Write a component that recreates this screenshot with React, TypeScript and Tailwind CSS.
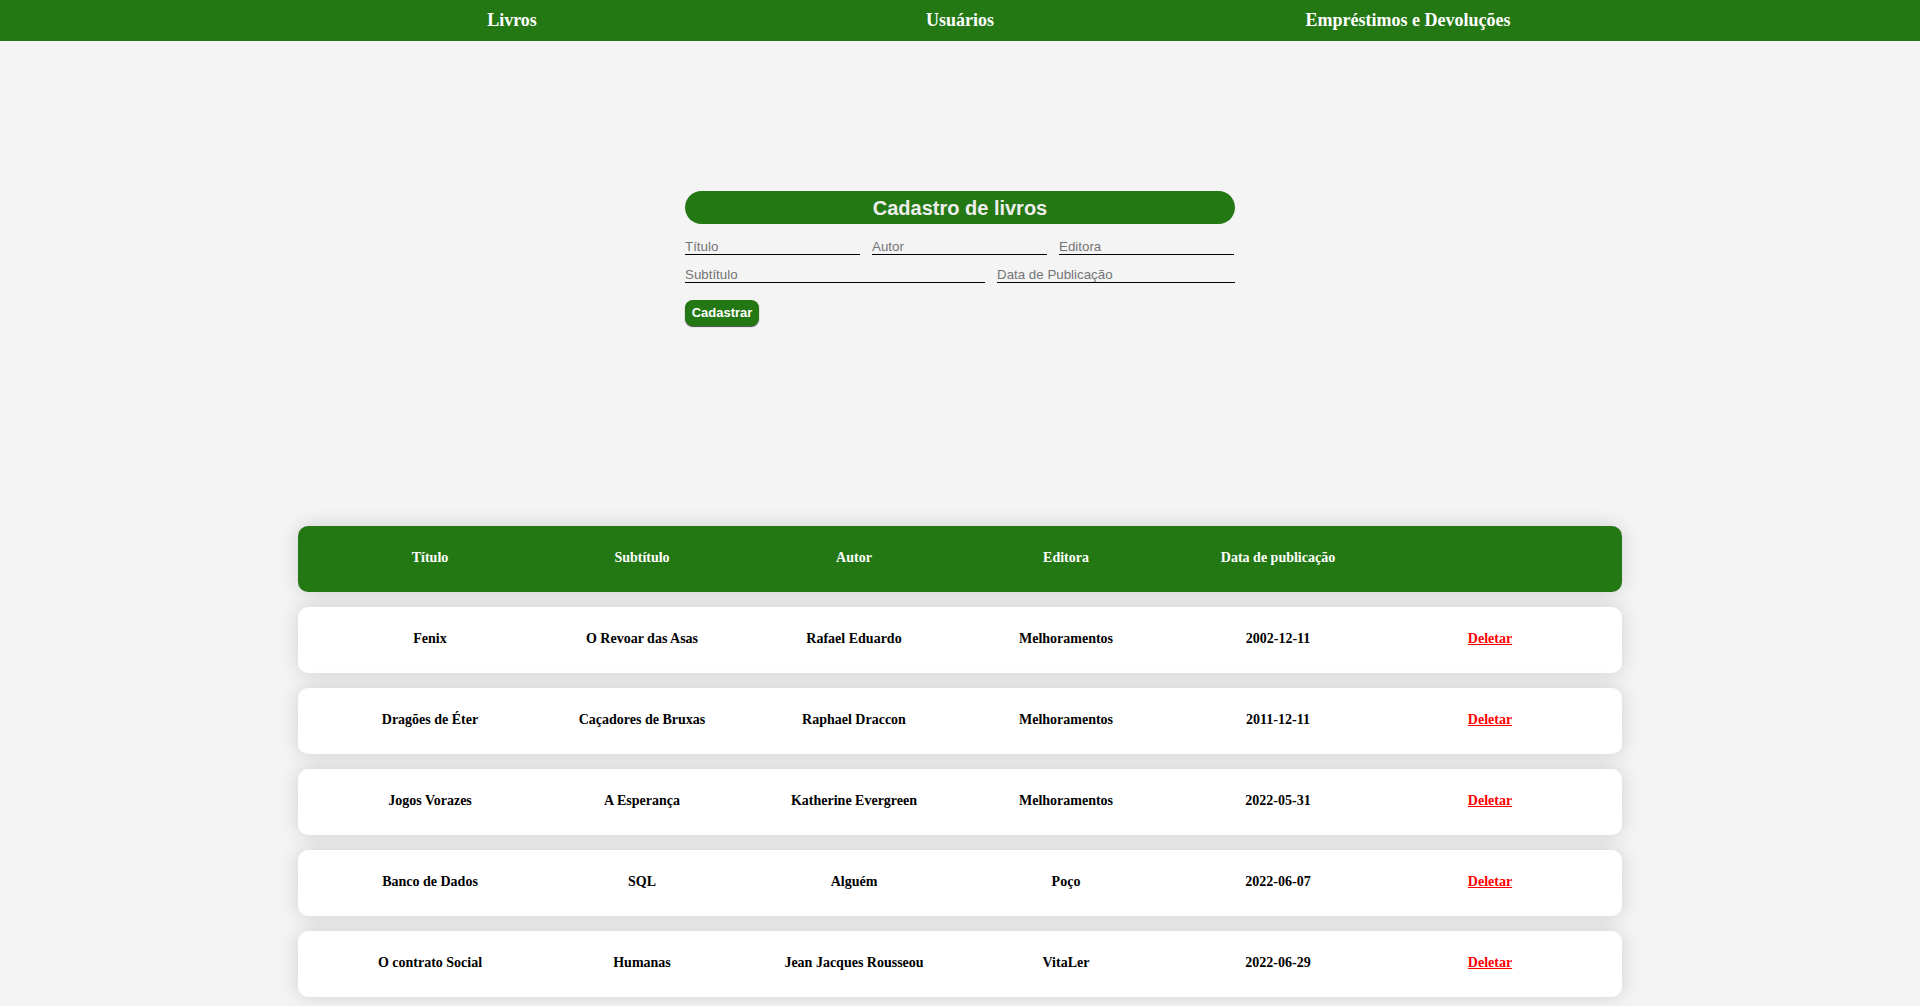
import React from "react";

const rows = [
  ["Fenix", "O Revoar das Asas", "Rafael Eduardo", "Melhoramentos", "2002-12-11"],
  ["Dragões de Éter", "Caçadores de Bruxas", "Raphael Draccon", "Melhoramentos", "2011-12-11"],
  ["Jogos Vorazes", "A Esperança", "Katherine Evergreen", "Melhoramentos", "2022-05-31"],
  ["Banco de Dados", "SQL", "Alguém", "Poço", "2022-06-07"],
  ["O contrato Social", "Humanas", "Jean Jacques Rousseou", "VitaLer", "2022-06-29"],
];

const serif = { fontFamily: '"Liberation Serif", "Times New Roman", serif' };
const sans = { fontFamily: '"Liberation Sans", Arial, sans-serif' };

export default function App() {
  return (
    <div className="min-h-[1006px] bg-[#f4f4f4]" style={serif}>
      <nav className="h-[41px] bg-[#247814]">
        <ul className="mx-auto grid h-full w-[1344px] grid-cols-3 items-center text-center text-[18px] font-bold text-white">
          <li>Livros</li>
          <li>Usuários</li>
          <li>Empréstimos e Devoluções</li>
        </ul>
      </nav>

      <form className="mx-auto mt-[150px] w-[550px]" style={sans} onSubmit={(e) => e.preventDefault()}>
        <h1 className="flex h-[33px] items-center justify-center rounded-full bg-[#247814] text-[20px] font-bold text-[#eeeeee]">
          Cadastro de livros
        </h1>
        <div className="mt-[11px] flex gap-3">
          {["Título", "Autor", "Editora"].map((p) => (
            <input
              key={p}
              placeholder={p}
              className="h-[20px] w-[175px] border-b border-black bg-transparent px-0 pt-[4px] pb-0 text-[13.33px] text-black outline-none placeholder:text-[#757575]"
            />
          ))}
        </div>
        <div className="mt-[8px] flex gap-3">
          <input
            placeholder="Subtítulo"
            className="h-[20px] w-[300px] border-b border-black bg-transparent px-0 pt-[4px] pb-0 text-[13.33px] text-black outline-none placeholder:text-[#757575]"
          />
          <input
            placeholder="Data de Publicação"
            className="h-[20px] w-[238px] border-b border-black bg-transparent px-0 pt-[4px] pb-0 text-[13.33px] text-black outline-none placeholder:text-[#757575]"
          />
        </div>
        <button
          type="submit"
          className="mt-[17px] flex h-[26px] w-[74px] items-center justify-center rounded-lg bg-[#247814] text-[13px] font-bold text-white shadow-[0_1px_1px_rgba(0,0,0,0.7)]"
        >
          Cadastrar
        </button>
      </form>

      <div className="mx-auto mt-[200px] flex w-[1324px] flex-col gap-[15px] pb-[10px]">
        <div className="grid h-[66px] grid-cols-6 items-center rounded-[10px] bg-[#247814] px-[26px] pb-[3px] text-center text-[14px] font-bold text-white shadow-[0_0_20px_rgba(0,0,0,0.15)]">
          <div>Título</div>
          <div>Subtítulo</div>
          <div>Autor</div>
          <div>Editora</div>
          <div>Data de publicação</div>
          <div></div>
        </div>
        {rows.map((r, i) => (
          <div
            key={i}
            className="grid h-[66px] grid-cols-6 items-center rounded-[10px] bg-white px-[26px] pb-[3px] text-center text-[14px] font-bold text-black shadow-[0_0_20px_rgba(0,0,0,0.15)]"
          >
            {r.map((c, j) => (
              <div key={j}>{c}</div>
            ))}
            <div>
              <a href="#" className="text-[#ff0000] underline">
                Deletar
              </a>
            </div>
          </div>
        ))}
      </div>
    </div>
  );
}
